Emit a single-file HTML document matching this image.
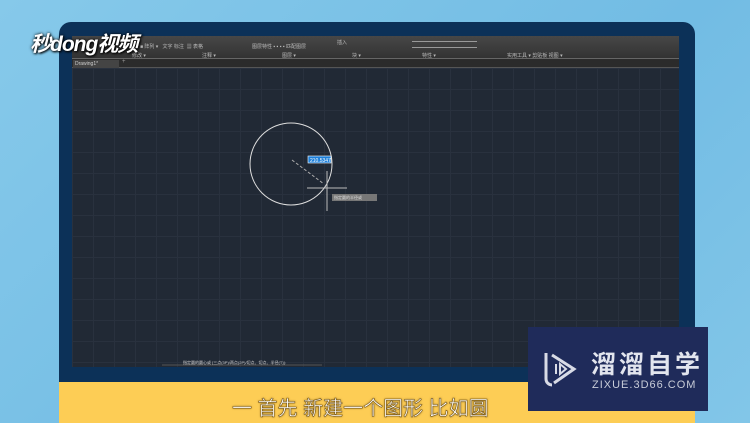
<!DOCTYPE html>
<html><head><meta charset="utf-8"><style>
*{margin:0;padding:0;box-sizing:border-box}
body{width:750px;height:423px;overflow:hidden;position:relative;background:linear-gradient(135deg,#86c9ea,#72bce4 60%,#82c6e8);font-family:"Liberation Sans","Noto Sans CJK SC",sans-serif}
.frame{position:absolute;left:59px;top:22px;width:636px;height:380px;background:#0c3158;border-radius:12px 12px 0 0}
.screen{position:absolute;left:72px;top:36px;width:607px;height:331px;background-color:#212935;
background-image:linear-gradient(#29313e 1px,transparent 1px),linear-gradient(90deg,#29313e 1px,transparent 1px);background-size:21px 21px;background-position:0 32px}
.ribbon{position:absolute;left:0;top:0;width:607px;height:22px;background:linear-gradient(#474747,#333);color:#bbb;font-size:5px}
.tabs{position:absolute;left:0;top:22px;width:607px;height:10px;background:#2b2b2b;border-top:1px solid #666;border-bottom:1px solid #555}
.tab{position:absolute;left:1px;top:1px;width:46px;height:8px;background:#444;color:#ccc;font-size:5px;padding-left:2px;line-height:8px}
.yellow{position:absolute;left:59px;top:382px;width:636px;height:41px;background:#fdcd55}
.sub{position:absolute;left:232px;top:392px;font-size:20px;color:#fff;white-space:nowrap;-webkit-text-stroke:0.6px #7a5a1a;text-shadow:0 0 2px #7a5a1a}
.logo{position:absolute;left:528px;top:327px;width:180px;height:84px;background:#1f2b5a}
.wm{position:absolute;left:30px;top:28px;font-size:21px;font-weight:bold;color:#fff;font-style:italic;text-shadow:0 0 3px #000,1px 1px 2px #000;letter-spacing:-1px}
</style></head><body>
<div class="frame"></div>
<div class="screen">
 <div class="ribbon">
  <span style="position:absolute;left:60px;top:16px">修改 ▾</span>
  <span style="position:absolute;left:130px;top:16px">注释 ▾</span>
  <span style="position:absolute;left:210px;top:16px">图层 ▾</span>
  <span style="position:absolute;left:280px;top:16px">块 ▾</span>
  <span style="position:absolute;left:350px;top:16px">特性 ▾</span>
  <span style="position:absolute;left:435px;top:16px">实用工具 ▾ 剪贴板 视图 ▾</span>
  <span style="position:absolute;left:265px;top:3px">插入</span>
  <span style="position:absolute;left:340px;top:5px;width:65px;height:1px;background:#999"></span>
  <span style="position:absolute;left:340px;top:11px;width:65px;height:1px;background:#999"></span>
  <span style="position:absolute;left:68px;top:7px">■ 阵列 ▾ &nbsp; 文字 标注 &nbsp;▦ 表格</span>
  <span style="position:absolute;left:180px;top:7px">图层特性 ▪ ▪ ▪ ▪ 匹配图层</span>
 </div>
 <div class="tabs"><div class="tab">Drawing1*</div><span style="position:absolute;left:50px;top:0;color:#999;font-size:6px">+</span></div>
 <svg width="607" height="331" style="position:absolute;left:0;top:0">
  <circle cx="219" cy="128" r="41" fill="none" stroke="#ddd" stroke-width="1"/>
  <line x1="220" y1="124" x2="252" y2="148" stroke="#aaa" stroke-dasharray="3,2"/>
  <line x1="255" y1="135" x2="255" y2="175" stroke="#bbb"/>
  <line x1="235" y1="152" x2="275" y2="152" stroke="#bbb"/>
  <rect x="236" y="120" width="23" height="7" fill="#1e7fd8" stroke="#fff" stroke-width=".6"/>
  <text x="238" y="126" font-size="5" fill="#fff">210.5347</text>
  <rect x="260" y="158" width="45" height="7" fill="#777"/>
  <text x="262" y="163" font-size="4" fill="#ddd">指定圆的半径或</text>
  <line x1="90" y1="329" x2="250" y2="329" stroke="#555"/>
  <text x="111" y="328" font-size="4" fill="#ccc">指定圆的圆心或 [三点(3P)/两点(2P)/切点、切点、半径(T)]:</text>
 </svg>
</div>
<div class="yellow"></div>
<div class="sub">一 首先 新建一个图形 比如圆</div>
<div class="logo">
 <svg width="40" height="40" style="position:absolute;left:12px;top:22px" viewBox="0 0 40 40" fill="none" stroke="#d8dbe6" stroke-width="3">
  <path d="M6 4 V30 A6 6 0 0 0 12 36"/>
  <path d="M12 6 L34 20 L14 34"/>
  <path d="M16 15 V25 M20 15 L26 20 L20 25Z" stroke-width="2"/>
 </svg>
 <div style="position:absolute;left:63px;top:18px;color:#e2e5ee;font-size:25px;letter-spacing:3px;font-weight:bold">溜溜自学</div>
 <div style="position:absolute;left:64px;top:52px;color:#c8ccd8;font-size:11px;letter-spacing:1px">ZIXUE.3D66.COM</div>
</div>
<div class="wm">秒dong视频</div>
</body></html>
